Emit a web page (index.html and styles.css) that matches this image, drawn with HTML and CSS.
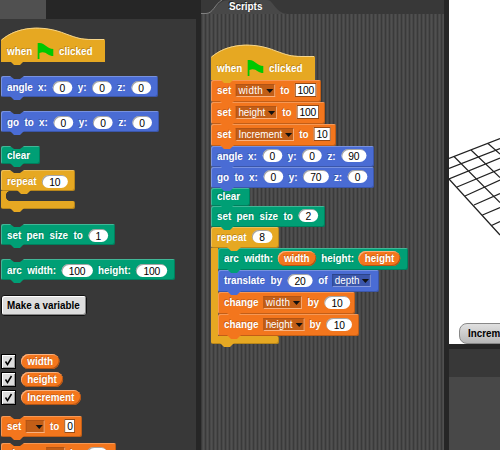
FILE: index.html
```html
<!DOCTYPE html>
<html lang="en"><head><meta charset="utf-8"><title>Blocks editor</title><link rel="stylesheet" href="styles.css"></head>
<body>
<main class="ide">
<aside class="side"><div class="cat"></div>
<div class="palette">
<div class="hat g1"><svg class="dome" width="105" height="35"><path d="M0 35V13C16-1 42-3 65 7C76 11 80 12 91 12H103Q104 12 104 14V35Z"/><path class="shine" d="M.5 13C16-.5 42-2.5 65 7C76 11 80 12.500 91 12.500H103"/></svg><div class="in"><b>when</b><svg class="flag" width="18" height="17" viewBox="0 0 16 17" preserveAspectRatio="none"><path d="M0 0H2C8 0 9 6 16 6V13C10 13 8 7 2 10V16H0Z"/></svg><b>clicked</b></div></div>
<div class="block motion first g2" style="width:157px"><div class="in"><b>angle</b><b>x:</b><i class="num">0</i><b>y:</b><i class="num">0</i><b>z:</b><i class="num">0</i></div></div>
<div class="block motion first g3" style="width:158px"><div class="in"><b>go</b><b>to</b><b>x:</b><i class="num">0</i><b>y:</b><i class="num">0</i><b>z:</b><i class="num">0</i></div></div>
<div class="block pen first short g3" style="width:39px"><div class="in"><b>clear</b></div></div>
<div class="loop g4"><div class="block control first head" style="width:74px"><div class="in"><b>repeat</b><i class="num">10</i></div></div><div class="slot"></div><div class="foot"></div></div>
<div class="block pen first g5" style="width:114px"><div class="in"><b>set</b><b>pen</b><b>size</b><b>to</b><i class="num">1</i></div></div>
<div class="block pen first g3" style="width:174px"><div class="in"><b>arc</b><b>width:</b><i class="num">100</i><b>height:</b><i class="num">100</i></div></div>
<button class="make"><span class="in">Make a variable</span></button>
<div class="vars">
<div class="var"><span class="check"><svg width="9" height="9"><path d="M1.500 4.500L3.500 7.500L7.500 1"/></svg></span><div class="in"><span class="pill">width</span></div></div>
<div class="var"><span class="check"><svg width="9" height="9"><path d="M1.500 4.500L3.500 7.500L7.500 1"/></svg></span><div class="in"><span class="pill">height</span></div></div>
<div class="var"><span class="check"><svg width="9" height="9"><path d="M1.500 4.500L3.500 7.500L7.500 1"/></svg></span><div class="in"><span class="pill">Increment</span></div></div>
</div>
<div class="block data first g6" style="width:81px"><div class="in"><b>set</b><span class="menu empty"></span><b>to</b><i class="txt">0</i></div></div>
<div class="block data first g7" style="width:115px"><div class="in"><b>change</b><span class="menu empty"></span><b>by</b><i class="num">1</i></div></div>
</div></aside>
<section class="editor"><header class="tabs"><svg width="100" height="14"><path d="M0 14C14 14 16 0 28 0H66C73 0 74 14 88 14Z"/><path class="edge" d="M0 13.500H5C12 13.500 14 4 21 0"/></svg><span class="tabname">Scripts</span></header>
<div class="canvas">
<div class="hat"><svg class="dome" width="105" height="36"><path d="M0 36V13C16-1 42-3 65 7C76 11 80 12 91 12H103Q104 12 104 14V36Z"/><path class="shine" d="M.5 13C16-.5 42-2.500 65 7C76 11 80 12.500 91 12.500H103"/></svg><div class="in"><b>when</b><svg class="flag" width="18" height="17" viewBox="0 0 16 17" preserveAspectRatio="none"><path d="M0 0H2C8 0 9 6 16 6V13C10 13 8 7 2 10V16H0Z"/></svg><b>clicked</b></div></div>
<div class="block data" style="width:110px"><div class="in"><b>set</b><span class="menu wide">width</span><b>to</b><i class="txt">100</i></div></div>
<div class="block data" style="width:114px"><div class="in"><b>set</b><span class="menu">height</span><b>to</b><i class="txt">100</i></div></div>
<div class="block data" style="width:125px"><div class="in"><b>set</b><span class="menu">Increment</span><b>to</b><i class="txt">10</i></div></div>
<div class="block motion" style="width:163px"><div class="in"><b>angle</b><b>x:</b><i class="num">0</i><b>y:</b><i class="num">0</i><b>z:</b><i class="num">90</i></div></div>
<div class="block motion" style="width:163px"><div class="in"><b>go</b><b>to</b><b>x:</b><i class="num">0</i><b>y:</b><i class="num">70</i><b>z:</b><i class="num">0</i></div></div>
<div class="block pen short" style="width:39px"><div class="in"><b>clear</b></div></div>
<div class="block pen" style="width:114px"><div class="in"><b>set</b><b>pen</b><b>size</b><b>to</b><i class="num">2</i></div></div>
<div class="loop"><div class="block control head" style="width:68px"><div class="in"><b>repeat</b><i class="num">8</i></div></div>
<div class="body">
<div class="block pen tall" style="width:190px"><div class="in"><b>arc</b><b>width:</b><span class="pill">width</span><b>height:</b><span class="pill">height</span></div></div>
<div class="block motion tall" style="width:161px"><div class="in"><b>translate</b><b>by</b><i class="num">20</i><b>of</b><span class="menu">depth</span></div></div>
<div class="block data" style="width:137px"><div class="in"><b>change</b><span class="menu wide">width</span><b>by</b><i class="num">10</i></div></div>
<div class="block data" style="width:141px"><div class="in"><b>change</b><span class="menu">height</span><b>by</b><i class="num">10</i></div></div>
</div><div class="foot"></div></div>
</div></section>
<aside class="right"><div class="stage"><svg class="grid" width="51" height="130"><path d="M0 28.500L51 8.500M0 38.500L51 18.500M0 49L51 28M8 57L51 39M16 66L51 50M25 75L51 63.500M33.500 85L51 77.500M42.500 95.500L51 91.500M0 49L51 105M5 26.500L51 72.500M22 20L51 47.500M39 13.500L51 24"/></svg><div class="watch"><div class="in">Increment</div></div></div><div class="spritebar"></div><div class="corral"></div></aside>
</main></body></html>
```
FILE: styles.css
```css
*{box-sizing:border-box}
body{margin:0;background:#262626;font-family:"Liberation Sans",sans-serif;font-size:11px;line-height:14px;overflow:hidden}
.ide{display:grid;grid-template-columns:196px 243px 51px;column-gap:5px;width:500px;height:450px;overflow:hidden}
.side{display:flex;flex-direction:column;height:450px;overflow:hidden}
.cat{width:46px;height:19px;background:#505050;flex:none}
.palette{height:431px;background:#383838;padding:8px 0 0 1px;overflow:hidden}
/* labels are condensed horizontally; widths inside .in are before scaling */
.in{position:relative;display:flex;align-items:center;gap:6px;flex:none;width:max-content;transform:scaleX(.895);transform-origin:0 50%}
b{color:#fff;font-weight:bold;white-space:nowrap;text-shadow:-1px -1px rgba(0,0,0,.2)}
i{font-style:normal}
.hat{position:relative;height:35px;width:105px;display:flex;align-items:center;padding:13px 0 0 6px;z-index:1}
.flag{fill:#00c800;margin-top:1px}
.dome{position:absolute;left:0;top:0;fill:#e6a822}
.shine{fill:none;stroke:#f5d58c;stroke-width:1}
.hat:after,.block:after,.foot:after{content:"";position:absolute;left:9px;bottom:-3px;width:14px;height:4px;background:inherit;clip-path:polygon(0 0,100% 0,10px 100%,4px 100%);z-index:2}
.hat:after{background:#e6a822}
.block{position:relative;height:21px;border-radius:2px;display:flex;align-items:center;padding-left:6px;box-shadow:inset 1px 1px rgba(255,255,255,.25),inset -1px -1px rgba(0,0,0,.2)}
.first:before{content:"";position:absolute;left:9px;top:0;width:14px;height:3px;background:#383838;clip-path:polygon(0 0,100% 0,10px 100%,4px 100%)}
.motion{background:#4a6cd4}.pen{background:#009f75}.control{background:#e6a822}.data{background:#f3761d}
.short{height:18px}
.num{background:#fff;color:#000;border-radius:8px/7px;height:13px;padding:0 8.200px;font-size:11.5px;letter-spacing:-.25px;line-height:14px;text-align:center;box-shadow:inset 1px 1px rgba(0,0,0,.35)}
.txt{background:#fff;color:#000;height:14px;font-size:11.5px;letter-spacing:-.25px;line-height:13px;padding:0 2px;border:1px solid #994a12}
.menu{position:relative;height:13px;line-height:11px;border:1px solid;border-color:#b25415 #f9b17f #f9b17f #b25415;background:#c25e17;color:#fff;padding:0 12px 0 2px;margin-left:-1px}
.wide{letter-spacing:.4px}
.motion .menu{background:#3b56aa;border-color:#2c4488 #8598dd #8598dd #2c4488}
.menu:after{content:"";position:absolute;right:1px;top:4px;border:4.5px solid transparent;border-top:4px solid #111;border-bottom:0}
.menu.empty{width:21px}
.pill{height:15px;border-radius:9px/8px;background:#f3761d;color:#fff;font-weight:bold;padding:0 7px;line-height:15px;box-shadow:inset 1px 1px #f9b17f,inset -1px -1px #b25415;text-shadow:-1px -1px rgba(0,0,0,.2)}
.block .pill{margin:0 0 0 -1px}
.g2,.g3{margin-top:14px}.g4{margin-top:6px}.g5{margin-top:15px}.g6{margin-top:11px}.g7{margin-top:6px}
.canvas .block .in{top:-.6px}
.palette .block .in{top:.5px}
.palette .short .in,.palette .data .in{top:-.5px}
.loop{position:relative;width:75px}
.head:after{left:16px}
.slot{height:10px;background:radial-gradient(circle at 10px 5px,#383838 5px,#e6a822 5.500px) 0 0/10px 10px no-repeat}
.foot{position:relative;height:8px;width:74px;background:#e6a822;border-radius:0 2px 2px 2px;box-shadow:inset -1px -1px rgba(0,0,0,.2)}
.make{display:flex;align-items:center;margin:15px 0 0;width:86px;height:21px;border:1px solid #111;border-radius:3px;background:#ddd;box-shadow:inset 1px 1px #fff,inset -1px -1px #888;font:bold 11px/14px "Liberation Sans",sans-serif;color:#000;padding:0 0 1px 5px;white-space:nowrap}
.vars{display:flex;flex-direction:column;gap:3px;margin-top:38px}
.var{display:flex;gap:5px;height:15px}
.check{width:15px;height:15px;border:1px solid #000;background:#ddd;box-shadow:inset 1px 1px #fff,inset -1px -1px #999;display:flex;align-items:center;justify-content:center;flex:none}
.check path{fill:none;stroke:#000;stroke-width:1.5}
.editor{height:450px;overflow:hidden}
.tabs{height:14px;background:#383838;position:relative}
.tabs svg{display:block;fill:#484848}
.tabs .edge{fill:none;stroke:#808080}
.tabname{position:absolute;left:28px;top:-1px;color:#fff;font-weight:bold;transform:scaleX(.895);transform-origin:0 0;text-shadow:-1px -1px #222}
.canvas{height:436px;padding:30px 0 0 10px;background:repeating-linear-gradient(90deg,#3a3a3a 0 1px,#484848 1px 2px,#505050 2px 3px,#484848 3px 4px)}
.canvas .data,.canvas .tall{height:22px}
.canvas .hat{height:36px;padding-top:12px}
.body{border-left:7px solid #e6a822;width:200px}
.canvas .foot{width:68px}
.right{width:51px;display:flex;flex-direction:column;overflow:hidden}
.stage{height:344px;background:#fff;overflow:hidden;padding-top:130px;flex:none}
.grid{display:block;fill:none;stroke:#222;stroke-width:1.2}
.watch{margin:63px 0 0 10px;width:80px;height:21px;border:1px solid #888;border-radius:8px;background:linear-gradient(#e0e0e0,#b8b8b8);font-weight:bold;padding:2px 8px}
.spritebar{height:28px;margin-top:5px;background:#383838;flex:none}
.corral{flex:1;background:#484848}
```
